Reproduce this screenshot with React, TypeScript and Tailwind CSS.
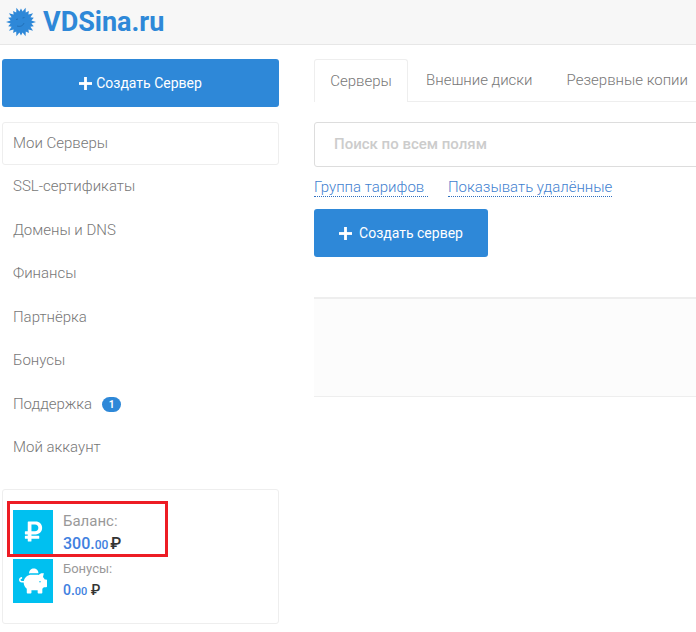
import React from "react";
import { FaPiggyBank, FaRubleSign } from "react-icons/fa";

const sun = (() => {
  const pts: string[] = [];
  const n = 20;
  for (let i = 0; i < n * 2; i++) {
    const a = (Math.PI * i) / n;
    const r = i % 2 === 0 ? (i % 4 === 0 ? 15 : 13.5) : 10.5;
    pts.push(`${(15 + r * Math.cos(a)).toFixed(1)},${(15 + r * Math.sin(a)).toFixed(1)}`);
  }
  return pts.join(" ");
})();

function Plus({ size }: { size: number }) {
  return (
    <svg width={size} height={size} viewBox="0 0 12 12" className="shrink-0" fill="#fff">
      <rect x="4.7" y="0" width="2.6" height="12" />
      <rect x="0" y="4.7" width="12" height="2.6" />
    </svg>
  );
}

const nav = ["SSL-сертификаты", "Домены и DNS", "Финансы", "Партнёрка", "Бонусы"];

export default function App() {
  return (
    <div className="relative h-[632px] w-[696px] overflow-hidden bg-white font-['Roboto',sans-serif] text-[15px] font-light text-[#777]">
      <header className="flex h-[45px] items-center gap-[1px] border-b border-[#e7e7e7] bg-[#f7f7f7] pl-[6px]">
        <svg width="30" height="30" viewBox="0 0 30 30" className="mt-[-1px]">
          <polygon points={sun} fill="#2e88d8" />
          <path d="M10 12.5l2 -.5M16.5 11l2 -.5M11 19c3 1 6 0 7-3" fill="none" stroke="#1f6bb0" strokeWidth="0.8" />
        </svg>
        <span className="ml-[6px] text-[27px] leading-none font-bold text-[#2e88d8]">VDSina.ru</span>
      </header>

      <div className="flex items-start pl-[2px]">
        <aside className="mt-[14px] w-[277px] shrink-0">
          <button className="flex h-[48px] w-full items-center justify-center gap-[4px] rounded-[3px] bg-[#2e88d8] text-[14px] font-normal text-white">
            <Plus size={13} />
            Создать Сервер
          </button>
          <nav className="mt-[15px]">
            <a className="mb-[-0.75px] flex h-[43px] items-center rounded-[3px] border border-[#eeeeee] pl-[10px]">Мои Серверы</a>
            {nav.map((t, i) => (
              <a key={t} className={i % 2 === 1 ? "flex h-[43.5px] items-center pt-[2px] pl-[11px]" : "flex h-[43.5px] items-center pl-[11px]"}>
                {t}
              </a>
            ))}
            <a className="flex h-[43.5px] items-center pt-[2px] pl-[11px]">
              Поддержка
              <span className="ml-[10px] flex h-[15px] w-[19px] items-center justify-center rounded-full bg-[#2e88d8] text-[10px] font-bold text-white">
                1
              </span>
            </a>
            <a className="flex h-[43.5px] items-center pl-[11px]">Мой аккаунт</a>
          </nav>
          <section className="mt-[19.75px] flex h-[135px] flex-col rounded-[3px] border border-[#eeeeee] pt-[20px] pl-[10px]">
            <div className="flex h-[44px] gap-[10px]">
              <div className="flex h-[44px] w-[40px] items-center justify-center bg-[#00c0f0] text-white">
                <FaRubleSign size={23} />
              </div>
              <div>
                <div className="mt-[3px] text-[15px] leading-[16px] font-normal text-[#999]">Баланс:</div>
                <div className="mt-[5px] text-[16px] leading-[20px] font-medium text-[#4080e0]">
                  300.<span className="text-[12px]">00</span> <span className="ml-[-2px] text-[#333]">₽</span>
                </div>
              </div>
            </div>
            <div className="mt-[5px] flex h-[44px] gap-[10px]">
              <div className="flex h-[44px] w-[40px] items-center justify-center bg-[#00c0f0] text-white">
                <FaPiggyBank size={28} />
              </div>
              <div>
                <div className="mt-[2px] text-[13px] leading-[16px] font-normal text-[#999]">Бонусы:</div>
                <div className="mt-[3px] text-[14px] leading-[20px] font-medium text-[#4080e0]">
                  0.<span className="text-[11px]">00</span> <span className="text-[#333]">₽</span>
                </div>
              </div>
            </div>
          </section>
        </aside>

        <main className="mt-[14px] ml-[35px] w-[500px] shrink-0">
          <div className="flex h-[43px] border-b border-[#eeeeee]">
            <div className="flex h-[43px] w-[94px] items-center justify-center rounded-t-[3px] border border-b-0 border-[#eeeeee] bg-white">
              Серверы
            </div>
            <div className="flex items-center pl-[18px]">Внешние диски</div>
            <div className="flex items-center pl-[34px] whitespace-nowrap">Резервные копии</div>
          </div>
          <div className="mt-[20px] flex h-[45px] items-center rounded-[3px] border border-[#dddddd] pl-[19px] text-[15px] font-medium text-[#cccccc]">
            Поиск по всем полям
          </div>
          <div className="mt-[12px] flex h-[18px] gap-[20px] font-light text-[#3f7fd0]">
            <span className="w-[114px] border-b border-dotted border-[#2e6fc0] leading-[16px] whitespace-nowrap">Группа тарифов</span>
            <span className="border-b border-dotted border-[#2e6fc0] leading-[16px]">Показывать удалённые</span>
          </div>
          <button className="mt-[12px] flex h-[48px] w-[174px] items-center justify-center gap-[7px] rounded-[3px] bg-[#2e88d8] text-[14px] font-normal text-white">
            <Plus size={13} />
            Создать сервер
          </button>
          <div className="mt-[40px] h-[100px] border-t-2 border-b border-[#eeeeee] bg-[#fcfcfc]" />
        </main>
      </div>

      <div className="absolute top-[501px] left-[7px] h-[56px] w-[161px] border-[3px] border-[#ed1c24]" />
    </div>
  );
}
